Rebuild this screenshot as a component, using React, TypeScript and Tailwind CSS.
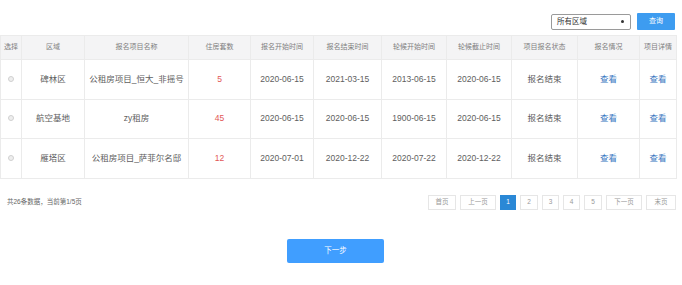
const rows = [
  { area: "碑林区", name: "公租房项目_恒大_非摇号", count: "5", s1: "2020-06-15", s2: "2021-03-15", w1: "2013-06-15", w2: "2020-06-15" },
  { area: "航空基地", name: "zy租房", count: "45", s1: "2020-06-15", s2: "2020-06-15", w1: "1900-06-15", w2: "2020-06-15" },
  { area: "雁塔区", name: "公租房项目_萨菲尔名邸", count: "12", s1: "2020-07-01", s2: "2020-12-22", w1: "2020-07-22", w2: "2020-12-22" },
];

const headers = ["选择", "区域", "报名项目名称", "住房套数", "报名开始时间", "报名结束时间", "轮候开始时间", "轮候截止时间", "项目报名状态", "报名情况", "项目详情"];
const widths = ["w-[21px]", "w-[63px]", "w-[104px]", "w-[62px]", "w-[63px]", "w-[68px]", "w-[65px]", "w-[65px]", "w-[66px]", "w-[62px]", "w-[37px]"];

const pages = ["首页", "上一页", "1", "2", "3", "4", "5", "下一页", "末页"];
const pageW = ["w-[28px]", "w-[36px]", "w-[16px]", "w-[18px]", "w-[17px]", "w-[17px]", "w-[18px]", "w-[36px]", "w-[30px]"];

const App = () => {
  return (
    <div className="w-[682px] h-[285px] bg-white font-['Liberation_Sans','Noto_Sans_CJK_SC',sans-serif] text-[#606060]">
      {/* search bar */}
      <div className="flex justify-end items-center pt-[13px] pr-[7px] gap-[6px]">
        <div className="w-[80px] h-[16px] border border-[#9a9a9a] rounded-[2px] flex items-center justify-between pl-[5px] pr-[6px] text-[7.5px] text-[#333]">
          <span>所有区域</span>
          <span className="w-[3px] h-[3px] rounded-full bg-[#333]"></span>
        </div>
        <button className="w-[38px] h-[17px] bg-[#3d9cf0] text-white text-[7px] rounded-[1px]">查询</button>
      </div>

      {/* table */}
      <table className="mt-[5px] w-[676px] table-fixed border-collapse">
        <thead>
          <tr className="h-[24px] bg-[#f4f4f5]">
            {headers.map((h, i) => (
              <th key={h} className={`${widths[i]} border border-[#ebebeb] font-normal text-[7px] text-[#808080] text-center p-0`}>{h}</th>
            ))}
          </tr>
        </thead>
        <tbody>
          {rows.map((r) => (
            <tr key={r.name} className="h-[39.5px] text-center text-[8.5px]">
              <td className="border border-[#ebebeb]">
                <span className="inline-block w-[6px] h-[6px] rounded-full border border-[#d0d0d0] bg-[#eee]"></span>
              </td>
              <td className="border border-[#ebebeb]">{r.area}</td>
              <td className="border border-[#ebebeb]">{r.name}</td>
              <td className="border border-[#ebebeb] text-[#e25757]">{r.count}</td>
              <td className="border border-[#ebebeb]">{r.s1}</td>
              <td className="border border-[#ebebeb]">{r.s2}</td>
              <td className="border border-[#ebebeb]">{r.w1}</td>
              <td className="border border-[#ebebeb]">{r.w2}</td>
              <td className="border border-[#ebebeb]">报名结束</td>
              <td className="border border-[#ebebeb] text-[#3a78c2]">查看</td>
              <td className="border border-[#ebebeb] text-[#3a78c2]">查看</td>
            </tr>
          ))}
        </tbody>
      </table>

      {/* pagination */}
      <div className="w-[676px] flex items-center justify-between mt-[16px] pl-[7px]">
        <span className="text-[6.5px] text-[#666]">共26条数据，当前第1/5页</span>
        <div className="flex gap-[4px]">
          {pages.map((p, i) => (
            <div
              key={p}
              className={`${pageW[i]} h-[15px] flex items-center justify-center text-[6.5px] border ${p === "1" ? "bg-[#2a88d6] border-[#2a88d6] text-white" : "border-[#e6e6e6] text-[#999]"}`}
            >
              {p}
            </div>
          ))}
        </div>
      </div>

      {/* next step */}
      <div className="w-[671px] flex justify-center mt-[29px]">
        <button className="w-[97px] h-[24px] bg-[#409eff] text-white text-[7.5px] rounded-[2px]">下一步</button>
      </div>
    </div>
  );
};

export default App;
